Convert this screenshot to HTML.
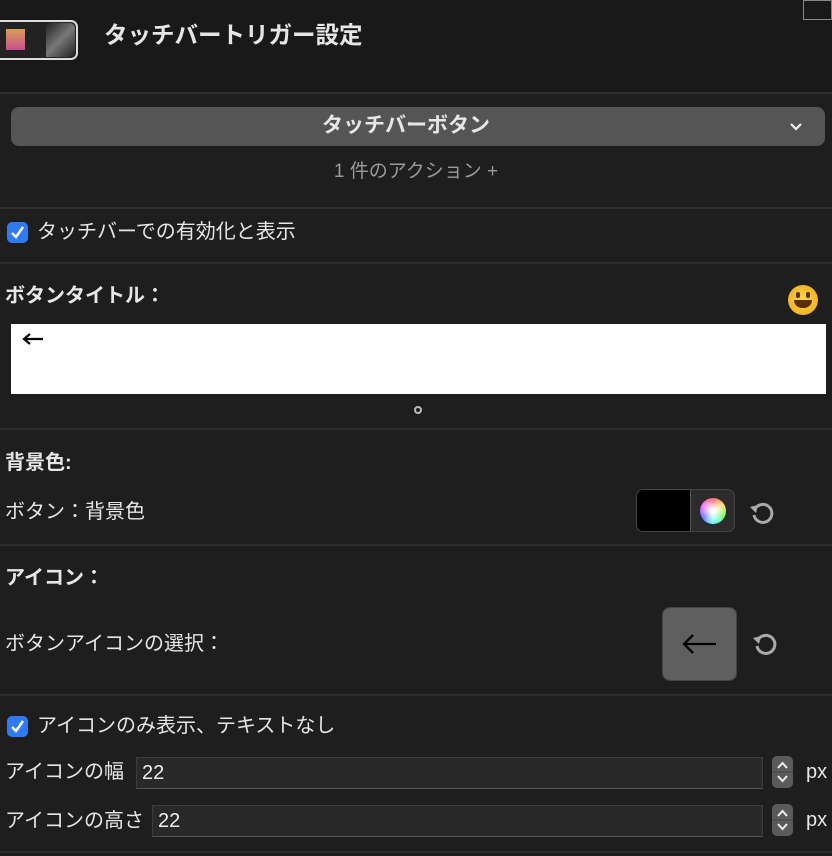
<!DOCTYPE html>
<html><head><meta charset="utf-8"><style>
*{margin:0;padding:0;box-sizing:border-box}
body{width:832px;height:856px;background:#1e1e1e;font-family:"Liberation Sans","Noto Sans CJK JP",sans-serif;color:#e6e6e6;position:relative;overflow:hidden}
.a{position:absolute}
.hr{position:absolute;left:0;width:832px;height:2px;background:#2f2f2f}
.t{position:absolute;font-size:20px;line-height:24px;white-space:nowrap}
.b{font-weight:bold}
.cb{position:absolute;width:21px;height:21px;background:#2f7bf5;border-radius:5px}
.fld{position:absolute;left:136px;width:627px;height:32px;background:#292929;border:1px solid #3c3c3c;border-bottom-color:#555;font-size:20px;line-height:30px;padding-left:5px;color:#eee}
.st{position:absolute;left:772px;width:21px;height:32px;background:#5a5a5a;border-radius:5px}
</style></head><body>
<div class="a" style="left:0;top:0;width:832px;height:93px;background:#191919"></div>
<div class="a" style="left:-6px;top:20px;width:84px;height:40px;border:2px solid #ddd;border-radius:7px;background:#222"></div>
<div class="a" style="left:6px;top:29px;width:19px;height:21px;background:linear-gradient(#d9a050,#c85090)"></div>
<div class="a" style="left:30px;top:23px;width:14px;height:34px;background:#222"></div>
<div class="a" style="left:46px;top:23px;width:29px;height:34px;background:linear-gradient(135deg,#222,#777 50%,#222);border-radius:0 5px 5px 0"></div>
<div class="a" style="left:803px;top:0;width:29px;height:20px;border:1px solid #888"></div>
<div class="t b" style="left:104px;top:21px;font-size:23.5px;line-height:28px">タッチバートリガー設定</div>
<div class="hr" style="top:92px"></div>
<div class="a" style="left:11px;top:107px;width:814px;height:39px;background:#555;border-radius:8px"></div>
<div class="t b" style="left:0;width:812px;text-align:center;top:113px;font-size:21px;line-height:26px">タッチバーボタン</div>
<svg class="a" style="left:789px;top:120px" width="14" height="14" viewBox="0 0 14 14"><path d="M2 4L7 9L12 4" fill="none" stroke="#eee" stroke-width="2.2"/></svg>
<div class="t" style="left:0;width:832px;text-align:center;top:160px;color:#9a9a9a;font-size:19px">1 件のアクション +</div>
<div class="hr" style="top:207px"></div>
<div class="cb" style="left:7px;top:222px"></div>
<svg class="a" style="left:7px;top:222px" width="21" height="21" viewBox="0 0 21 21"><path d="M5 11L9 15L16 5" fill="none" stroke="#fff" stroke-width="2.5"/></svg>
<div class="t" style="left:37px;top:220px">タッチバーでの有効化と表示</div>
<div class="hr" style="top:262px"></div>
<div class="t b" style="left:5px;top:284px">ボタンタイトル：</div>
<div class="a" style="left:788px;top:285px;width:30px;height:30px;border-radius:50%;background:radial-gradient(#ffd84a,#e9a51c)"></div>
<div class="a" style="left:796px;top:292px;width:4px;height:6px;background:#5a3000;border-radius:2px"></div>
<div class="a" style="left:806px;top:292px;width:4px;height:6px;background:#5a3000;border-radius:2px"></div>
<div class="a" style="left:794px;top:300px;width:18px;height:8px;background:#5a3000;border-radius:0 0 9px 9px"></div>
<div class="a" style="left:11px;top:324px;width:815px;height:70px;background:#fff"></div>
<svg class="a" style="left:22px;top:332px" width="22" height="14" viewBox="0 0 22 14"><path d="M21 7H3M8 2L2 7L8 12" fill="none" stroke="#000" stroke-width="2.2"/></svg>
<div class="a" style="left:414px;top:406px;width:8px;height:8px;border:2px solid #bbb;border-radius:50%"></div>
<div class="hr" style="top:428px"></div>
<div class="t b" style="left:5px;top:451px">背景色:</div>
<div class="t" style="left:5px;top:500px">ボタン：背景色</div>
<div class="a" style="left:636px;top:489px;width:99px;height:43px;background:#2c2c2c;border:1px solid #444;border-radius:7px;overflow:hidden"><div style="width:54px;height:43px;background:#000;border-right:1px solid #555"></div></div>
<div class="a" style="left:700px;top:498px;width:26px;height:26px;border-radius:50%;background:radial-gradient(#fff 10%,transparent 70%),conic-gradient(#f66,#fd6,#6f6,#6ff,#66f,#f6f,#f66)"></div>
<svg class="a" style="left:747px;top:498px" width="30" height="30" viewBox="0 0 30 30"><path d="M8 11A9 9 0 1 1 7 17" fill="none" stroke="#aaa" stroke-width="3"/><path d="M3 9L11 7L9 15Z" fill="#aaa"/></svg>
<div class="hr" style="top:544px"></div>
<div class="t b" style="left:5px;top:566px">アイコン：</div>
<div class="t" style="left:5px;top:632px">ボタンアイコンの選択：</div>
<div class="a" style="left:662px;top:607px;width:75px;height:74px;background:#5f5f5f;border:1px solid #444;border-radius:8px"></div>
<svg class="a" style="left:680px;top:630px" width="40" height="30" viewBox="0 0 40 30"><path d="M36 14H4M13 5L4 14L13 23" fill="none" stroke="#000" stroke-width="2.3"/></svg>
<svg class="a" style="left:750px;top:629px" width="30" height="30" viewBox="0 0 30 30"><path d="M8 11A9 9 0 1 1 7 17" fill="none" stroke="#aaa" stroke-width="3"/><path d="M3 9L11 7L9 15Z" fill="#aaa"/></svg>
<div class="hr" style="top:694px"></div>
<div class="cb" style="left:7px;top:716px"></div>
<svg class="a" style="left:7px;top:716px" width="21" height="21" viewBox="0 0 21 21"><path d="M5 11L9 15L16 5" fill="none" stroke="#fff" stroke-width="2.5"/></svg>
<div class="t" style="left:37px;top:714px">アイコンのみ表示、テキストなし</div>
<div class="t" style="left:5px;top:760px">アイコンの幅</div>
<div class="fld" style="top:757px">22</div>
<div class="st" style="top:756px"></div>
<svg class="a" style="left:772px;top:756px" width="21" height="32" viewBox="0 0 21 32"><path d="M6 12L10.5 7L15 12M6 20L10.5 25L15 20" fill="none" stroke="#eee" stroke-width="2"/><path d="M0 16H21" stroke="#444"/></svg>
<div class="t" style="left:806px;top:760px">px</div>
<div class="t" style="left:5px;top:809px">アイコンの高さ</div>
<div class="fld" style="top:805px;left:152px;width:611px">22</div>
<div class="st" style="top:804px"></div>
<svg class="a" style="left:772px;top:804px" width="21" height="32" viewBox="0 0 21 32"><path d="M6 12L10.5 7L15 12M6 20L10.5 25L15 20" fill="none" stroke="#eee" stroke-width="2"/><path d="M0 16H21" stroke="#444"/></svg>
<div class="t" style="left:806px;top:808px">px</div>
<div class="hr" style="top:851px"></div>
</body></html>
